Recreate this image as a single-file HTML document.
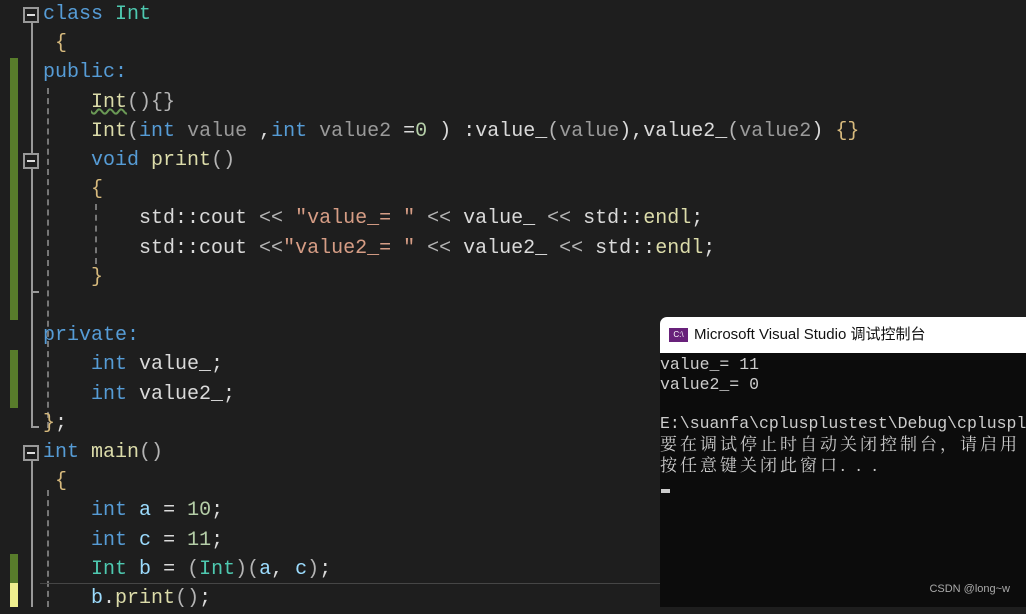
<!DOCTYPE html>
<html><head><meta charset="utf-8"><style>
body{margin:0;width:1026px;height:607px;background:#1e1e1e;overflow:hidden;position:relative;font-family:"Liberation Mono",monospace}
.l{position:absolute;left:43px;height:29px;line-height:30px;font-size:20px;white-space:pre;color:#dadada}
.k{color:#569cd6}.t{color:#4ec9b0}.f{color:#dcdcaa}.p{color:#9a9a9a}.s{color:#d69d85}.n{color:#b5cea8}.v{color:#9cdcfe}.b{color:#d7ba7d}.o{color:#b4b4b4}
.bar{position:absolute;left:10px;width:8px;background:#587c2b}
.fold{position:absolute;left:23px;width:16px;height:16px;border:2px solid #999;box-sizing:border-box}
.fold:after{content:"";position:absolute;left:2px;top:5px;width:8px;height:2px;background:#ddd}
.vl{position:absolute;width:2px;background:#999}
.dl{position:absolute;width:0;border-left:2px dashed #777}
#con{position:absolute;left:660px;top:317px;width:366px;height:290px;background:#0c0c0c;border-top-left-radius:7px;overflow:hidden}
#tb{height:36px;background:#fff;font-family:"Liberation Sans","Noto Sans CJK SC",sans-serif;font-size:15px;line-height:36px;color:#111;padding-left:34px;position:relative}
#ico{position:absolute;left:9px;top:11px;width:19px;height:14px;background:#68217a;color:#fff;font-size:8px;line-height:14px;text-align:center}
.c{position:absolute;left:0;font-size:16.5px;line-height:20px;color:#cccccc;white-space:pre}
.cj{font-family:"Noto Serif CJK SC","Noto Sans CJK SC",sans-serif;font-size:17px;letter-spacing:3px}
</style></head><body>
<div class="bar" style="top:58px;height:262px"></div>
<div class="bar" style="top:350px;height:58px"></div>
<div class="bar" style="top:554px;height:29px"></div>
<div class="bar" style="top:583px;height:24px;background:#efef8f"></div>
<div class="fold" style="top:7px"></div>
<div class="fold" style="top:153px"></div>
<div class="fold" style="top:445px"></div>
<div class="vl" style="left:31px;top:23px;height:130px"></div>
<div class="vl" style="left:31px;top:169px;height:123px"></div>
<div class="vl" style="left:31px;top:291px;width:8px;height:2px"></div>
<div class="vl" style="left:31px;top:292px;height:135px"></div>
<div class="vl" style="left:31px;top:426px;width:8px;height:2px"></div>
<div class="vl" style="left:31px;top:461px;height:146px"></div>
<div class="dl" style="left:47px;top:88px;height:340px"></div>
<div class="dl" style="left:95px;top:204px;height:60px"></div>
<div class="dl" style="left:47px;top:490px;height:117px"></div>
<div style="position:absolute;left:40px;top:583px;width:620px;height:1px;background:#464646"></div>

<div class="l" style="top:0"><span class="k">class</span> <span class="t">Int</span></div>
<div class="l b" style="top:29px"> {</div>
<div class="l k" style="top:58px">public:</div>
<div class="l" style="top:88px">    <span class="f" style="text-decoration:underline wavy #6a9955">Int</span><span class="o">(){}</span></div>
<div class="l" style="top:117px">    <span class="f">Int</span><span class="o">(</span><span class="k">int</span> <span class="p">value</span> ,<span class="k">int</span> <span class="p">value2</span> =<span class="n">0</span> ) :value_<span class="o">(</span><span class="p">value</span>),value2_<span class="o">(</span><span class="p">value2</span>) <span class="b">{}</span></div>
<div class="l" style="top:146px">    <span class="k">void</span> <span class="f">print</span><span class="o">()</span></div>
<div class="l b" style="top:175px">    {</div>
<div class="l" style="top:204px">        std::cout <span class="o">&lt;&lt;</span> <span class="s">"value_= "</span> <span class="o">&lt;&lt;</span> value_ <span class="o">&lt;&lt;</span> std::<span class="f">endl</span>;</div>
<div class="l" style="top:234px">        std::cout <span class="o">&lt;&lt;</span><span class="s">"value2_= "</span> <span class="o">&lt;&lt;</span> value2_ <span class="o">&lt;&lt;</span> std::<span class="f">endl</span>;</div>
<div class="l b" style="top:263px">    }</div>
<div class="l k" style="top:321px">private:</div>
<div class="l" style="top:350px">    <span class="k">int</span> value_;</div>
<div class="l" style="top:380px">    <span class="k">int</span> value2_;</div>
<div class="l" style="top:409px"><span class="b">}</span>;</div>
<div class="l" style="top:438px"><span class="k">int</span> <span class="f">main</span><span class="o">()</span></div>
<div class="l b" style="top:467px"> {</div>
<div class="l" style="top:496px">    <span class="k">int</span> <span class="v">a</span> = <span class="n">10</span>;</div>
<div class="l" style="top:526px">    <span class="k">int</span> <span class="v">c</span> = <span class="n">11</span>;</div>
<div class="l" style="top:555px">    <span class="t">Int</span> <span class="v">b</span> = <span class="o">(</span><span class="t">Int</span><span class="o">)(</span><span class="v">a</span>, <span class="v">c</span><span class="o">)</span>;</div>
<div class="l" style="top:584px">    <span class="v">b</span>.<span class="f">print</span><span class="o">()</span>;</div>

<div id="con">
<div id="tb"><div id="ico">C:\</div>Microsoft Visual Studio 调试控制台</div>
<div class="c" style="top:38px">value_= 11</div>
<div class="c" style="top:58px">value2_= 0</div>
<div class="c" style="top:97px">E:\suanfa\cplusplustest\Debug\cplusplustest.exe</div>
<div class="c cj" style="top:116px">要在调试停止时自动关闭控制台，请启用</div>
<div class="c cj" style="top:137px">按任意键关闭此窗口. . .</div>
<div style="position:absolute;left:1px;top:172px;width:9px;height:4px;background:#ccc"></div>
<div style="position:absolute;right:16px;top:266px;font-family:'Liberation Sans',sans-serif;font-size:11px;color:#aaa">CSDN @long~w</div>
</div>
</body></html>
